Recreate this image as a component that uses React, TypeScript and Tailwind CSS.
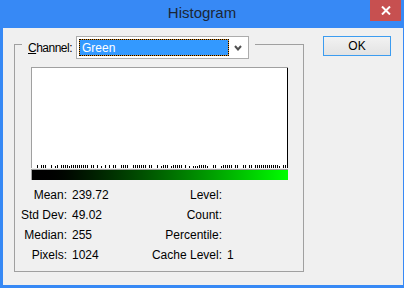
import React from "react";

// kecil: generator acak deterministik untuk titik-titik histogram
function makeTicks(): { x: number; h: number }[] {
  const ticks: { x: number; h: number }[] = [];
  let seed = 29;
  for (let x = 1; x < 255; x += 2) {
    seed = (seed * 1103515245 + 12345) % 2147483648;
    const r = seed / 2147483648;
    if (r < 0.68) ticks.push({ x, h: r < 0.1 ? 2 : 3 });
  }
  return ticks;
}

const ticks = makeTicks();

const stats: [string, string, string, string][] = [
  ["Mean:", "239.72", "Level:", ""],
  ["Std Dev:", "49.02", "Count:", ""],
  ["Median:", "255", "Percentile:", ""],
  ["Pixels:", "1024", "Cache Level:", "1"],
];

export default function App() {
  return (
    <div className="w-[404px] h-[288px] bg-[#3789f5] flex flex-col font-['Liberation_Sans',Arial,sans-serif] text-[12px] text-black">
      {/* title bar */}
      <div className="h-[28px] relative flex items-center justify-center text-[15px] text-[#1b2636]">
        <span className="pb-[1px]">Histogram</span>
        <div className="absolute right-[3px] top-0 w-[31px] h-[21px] bg-[#c75050] flex items-center justify-center">
          <svg width="10" height="9" viewBox="0 0 10 9">
            <path d="M1 0.5 L9 8.5 M9 0.5 L1 8.5" stroke="#fff" strokeWidth="2" />
          </svg>
        </div>
      </div>

      {/* client area */}
      <div className="flex-1 ml-[3px] mr-[1px] mb-[3px] bg-[#f0f0f0] flex items-start">
        <div className="ml-[11px] mt-[16px] w-[290px] h-[228px] border border-[#a0a0a0] flex flex-col">
          <div className="-mt-[9px] ml-[7px] self-start bg-[#f0f0f0] px-[6px] flex items-center">
            <span className="w-[48px] tracking-[-0.5px]">
              <span className="underline">C</span>hannel:
            </span>
            <div className="w-[173px] h-[23px] border border-[#acacac] bg-white flex items-stretch p-[2px]">
              <div className="w-[150px] border border-dotted border-black bg-[#d9922e]">
                <div className="h-full bg-[#3399ff] text-white pl-[2px] flex items-center">
                  Green
                </div>
              </div>
              <div className="flex-1 flex items-center justify-center">
                <svg width="8" height="6" viewBox="0 0 8 6">
                  <path d="M1 1 L4 4.5 L7 1" stroke="#505050" strokeWidth="2" fill="none" />
                </svg>
              </div>
            </div>
          </div>

          {/* histogram */}
          <div className="ml-[16px] mt-[8px] w-[257px] h-[101px] border-t border-l border-[#a0a0a0] bg-white">
            <svg width="256" height="100" shapeRendering="crispEdges" className="block">
              {ticks.map((t) => (
                <rect key={t.x} x={t.x} y={100 - t.h} width="1" height={t.h} fill="#000" />
              ))}
              <rect x="255" y="0" width="1" height="100" fill="#000" />
            </svg>
          </div>
          <div className="ml-[16px] mt-[1px] w-[257px] h-[11px] border-t border-l border-[#a0a0a0]">
            <div className="w-[256px] h-[10px] bg-gradient-to-r from-black to-[#00ff00]" />
          </div>

          {/* stats */}
          <div className="mt-[5px] grid grid-cols-[52px_50px_95px_40px] gap-x-[5px] auto-rows-[20px] items-center">
            {stats.map((row) => (
              <React.Fragment key={row[0]}>
                <span className="text-right whitespace-nowrap">{row[0]}</span>
                <span>{row[1]}</span>
                <span className="text-right whitespace-nowrap">{row[2]}</span>
                <span>{row[3]}</span>
              </React.Fragment>
            ))}
          </div>
        </div>

        <button className="ml-[19px] mt-[8px] w-[68px] h-[20px] border border-[#3c9cf0] bg-gradient-to-b from-[#f2f2f2] to-[#e3e3e3] flex items-center justify-center">
          OK
        </button>
      </div>
    </div>
  );
}
